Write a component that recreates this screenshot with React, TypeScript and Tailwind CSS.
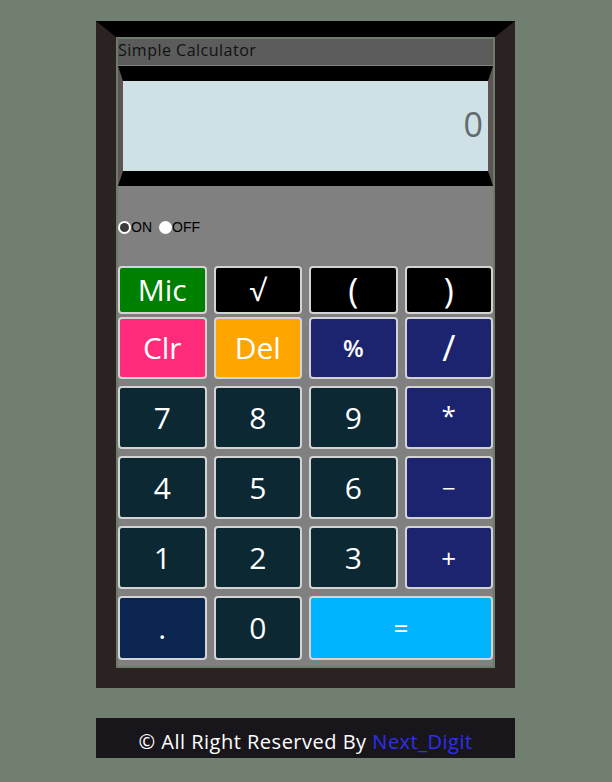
import React from "react";

const font = { fontFamily: '"Open Sans", "Noto Sans", sans-serif' };

type B = { t: string; c: string; span?: boolean; size?: string };

const rows: { h: string; mt: string; items: B[] }[] = [
  {
    h: "h-[48px]",
    mt: "mt-0",
    items: [
      { t: "Mic", c: "bg-[#008000]" },
      { t: "√", c: "bg-black" },
      { t: "(", c: "bg-black", size: "text-[34px]" },
      { t: ")", c: "bg-black", size: "text-[34px]" },
    ],
  },
  {
    h: "h-[62px]",
    mt: "mt-[3px]",
    items: [
      { t: "Clr", c: "bg-[#ff2a7a]" },
      { t: "Del", c: "bg-[#ffa500]" },
      { t: "%", c: "bg-[#1c2470]", size: "text-[24px] font-semibold" },
      { t: "/", c: "bg-[#1c2470]", size: "text-[36px]" },
    ],
  },
  {
    h: "h-[63px]",
    mt: "mt-[7px]",
    items: [
      { t: "7", c: "bg-[#0c2833]" },
      { t: "8", c: "bg-[#0c2833]" },
      { t: "9", c: "bg-[#0c2833]" },
      { t: "*", c: "bg-[#1c2470]", size: "text-[26px] pb-[6px]" },
    ],
  },
  {
    h: "h-[63px]",
    mt: "mt-[7px]",
    items: [
      { t: "4", c: "bg-[#0c2833]" },
      { t: "5", c: "bg-[#0c2833]" },
      { t: "6", c: "bg-[#0c2833]" },
      { t: "−", c: "bg-[#1c2470]", size: "text-[24px]" },
    ],
  },
  {
    h: "h-[63px]",
    mt: "mt-[7px]",
    items: [
      { t: "1", c: "bg-[#0c2833]" },
      { t: "2", c: "bg-[#0c2833]" },
      { t: "3", c: "bg-[#0c2833]" },
      { t: "+", c: "bg-[#1c2470]", size: "text-[26px]" },
    ],
  },
  {
    h: "h-[64px]",
    mt: "mt-[7px]",
    items: [
      { t: ".", c: "bg-[#0a2550]" },
      { t: "0", c: "bg-[#0c2833]" },
      { t: "=", c: "bg-[#00b4ff]", span: true, size: "text-[26px]" },
    ],
  },
];

export default function App() {
  return (
    <div className="min-h-screen bg-[#717f70] pt-[21px]" style={font}>
      <div className="ml-[96px] w-[419px] border-t-[16px] border-x-[20px] border-b-[20px] border-t-black border-x-[#2b2322] border-b-[#2b2322]">
        <div className="border-2 border-[#6d7b6b] bg-[#808080] pb-[6px]">
          <div className="h-[26px] bg-[#5c5c5c] text-[16px] leading-[23px] tracking-[0.5px] text-[#111]">
            Simple Calculator
          </div>
          <div className="mt-px flex h-[120px] items-center justify-end border-x-[5px] border-y-[15px] border-x-[#5e5454] border-y-black bg-[#cfe1e4] pr-[5px] pb-[4px] text-[34px] text-[#5f6b6e]">
            0
          </div>
          <div
            className="mt-[33px] flex h-[16px] items-center text-[14px] text-black"
            style={{ fontFamily: '"Liberation Sans", Arial, sans-serif' }}
          >
            <span className="flex h-[13px] w-[13px] items-center justify-center rounded-full bg-white">
              <span className="h-[9px] w-[9px] rounded-full bg-[#3b3b3b]" />
            </span>
            <span>ON</span>
            <span className="ml-[7px] h-[13px] w-[13px] rounded-full bg-white" />
            <span>OFF</span>
          </div>
          <div className="mt-[31px]">
            {rows.map((r, i) => (
              <div key={i} className={`grid grid-cols-4 grid-rows-1 gap-x-[7px] ${r.h} ${r.mt}`}>
                {r.items.map((b, j) => (
                  <div
                    key={j}
                    className={`flex min-h-0 items-center justify-center overflow-hidden rounded-[4px] border-2 border-[#d4d4d4] leading-none text-white ${b.c} ${b.span ? "col-span-2" : ""} ${b.size ?? "text-[30px]"}`}
                  >
                    {b.t}
                  </div>
                ))}
              </div>
            ))}
          </div>
        </div>
      </div>
      <div className="ml-[96px] mt-[30px] flex h-[40px] w-[419px] items-end justify-center bg-[#18161b] pb-px text-[20px] tracking-[0.5px] text-white">
        <span>
          © All Right Reserved By <span className="text-[#2e2ef0]">Next_Digit</span>
        </span>
      </div>
    </div>
  );
}
